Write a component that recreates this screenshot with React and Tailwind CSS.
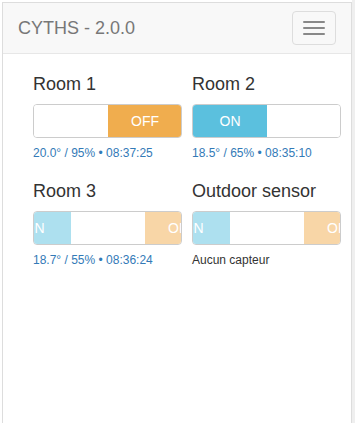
const rooms = [
  { name: "Room 1", state: "off", info: "20.0° / 95% • 08:37:25" },
  { name: "Room 2", state: "on", info: "18.5° / 65% • 08:35:10" },
  { name: "Room 3", state: "unknown", info: "18.7° / 55% • 08:36:24" },
  { name: "Outdoor sensor", state: "unknown", info: null },
];

function Switch({ state }) {
  // bootstrap-switch like: ON | label | OFF, slid with a margin
  const shift =
    state === "on" ? "ml-0" : state === "off" ? "-ml-[74px]" : "-ml-[37px]";
  const onBg = state === "unknown" ? "bg-[#ade0ef]" : "bg-[#5bc0de]";
  const offBg = state === "unknown" ? "bg-[#f8d6a7]" : "bg-[#f0ad4e]";

  return (
    <div className="h-[34px] w-full overflow-hidden rounded-[4px] border border-[#ccc] bg-white">
      <div className={`flex h-full w-[222px] ${shift}`}>
        <span className={`flex w-[74px] items-center justify-center text-[14px] text-white ${onBg}`}>
          ON
        </span>
        <span className="w-[74px] bg-white" />
        <span className={`flex w-[74px] items-center justify-center text-[14px] text-white ${offBg}`}>
          OFF
        </span>
      </div>
    </div>
  );
}

export default function App() {
  return (
    <div className="flex h-[423px] w-full overflow-hidden bg-white font-['Liberation_Sans',Arial,sans-serif]">
      <div className="ml-[2px] mt-[2px] w-[350px] border-x border-t border-[#ddd] bg-white">
        {/* navbar */}
        <div className="flex h-[51px] items-center justify-between border-b border-[#e7e7e7] bg-[#f8f8f8] pl-[15px] pr-[15px]">
          <span className="text-[18px] leading-[20px] text-[#777]">CYTHS - 2.0.0</span>
          <button
            type="button"
            className="flex h-[34px] w-[44px] flex-col items-center justify-center gap-[4px] rounded-[4px] border border-[#ddd]"
          >
            <span className="block h-[2px] w-[22px] rounded-[1px] bg-[#888]" />
            <span className="block h-[2px] w-[22px] rounded-[1px] bg-[#888]" />
            <span className="block h-[2px] w-[22px] rounded-[1px] bg-[#888]" />
          </button>
        </div>

        {/* rooms */}
        <div className="grid grid-cols-[149px_149px] gap-x-[10px] gap-y-[19px] pl-[30px] pt-[20px]">
          {rooms.map((room) => (
            <div key={room.name} className="flex flex-col">
              <h3 className="whitespace-nowrap text-[18px] leading-[20px] text-[#333]">{room.name}</h3>
              <div className="mt-[10px]">
                <Switch state={room.state} />
              </div>
              {room.info ? (
                <p className="mt-[7px] text-[12px] leading-[17px] text-[#337ab7]">{room.info}</p>
              ) : (
                <p className="mt-[7px] text-[12px] leading-[17px] text-[#333]">Aucun capteur</p>
              )}
            </div>
          ))}
        </div>
      </div>
      <div className="flex-1 bg-[#efefef]" />
    </div>
  );
}
